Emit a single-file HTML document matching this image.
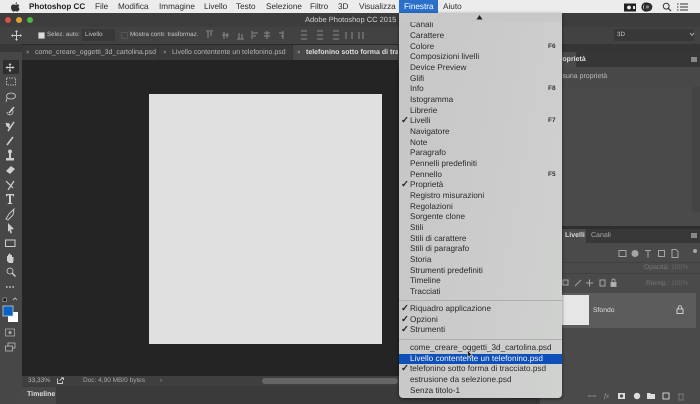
<!DOCTYPE html>
<html><head><meta charset="utf-8">
<style>
html,body{margin:0;padding:0;width:700px;height:404px;overflow:hidden;background:#222}
#r{position:relative;width:700px;height:404px;overflow:hidden;font-family:"Liberation Sans",sans-serif;filter:blur(0.35px);text-rendering:geometricPrecision}
#r div{position:absolute;white-space:nowrap}
.m{top:0;font-size:8.2px;line-height:13px;color:#2c2c2c}
.t{font-size:6.2px;line-height:10px;color:#c4c4c4}
.i{left:410px;font-size:8.2px;line-height:10px;color:#2a2a2a}
.c{left:401px;font-size:9.5px;line-height:10px;color:#222;font-weight:bold}
.f{left:548px;font-size:6.5px;line-height:10px;color:#333;font-weight:bold}
svg{position:absolute;overflow:visible}
</style></head><body><div id="r">

<!-- menu bar -->
<div style="left:0;top:0;width:700px;height:13px;background:#ececec"></div>
<svg style="left:11px;top:2px" width="9" height="10" viewBox="0 0 9 10"><path d="M6 0.300C5 .5 4.500 1.200 4.500 2.200 5.500 2.200 6.200 1.300 6 .3ZM4.400 2.900C3.600 2.900 3 2.400 2.300 2.400 1 2.500 0 3.600 0 5.200 0 7.200 1.400 9.600 2.500 9.600 3.200 9.600 3.600 9.100 4.400 9.100 5.200 9.100 5.500 9.600 6.300 9.600 7.300 9.600 8.200 8 8.600 6.900 7.500 6.400 7.100 4.400 8.400 3.400 7.800 2.600 7 2.400 6.400 2.400 5.600 2.400 5 2.900 4.400 2.900Z" fill="#333"/></svg>
<div class="m" style="left:29px;font-weight:bold;color:#222;font-size:8.100px">Photoshop CC</div>
<div class="m" style="left:95px">File</div>
<div class="m" style="left:118px">Modifica</div>
<div class="m" style="left:159px">Immagine</div>
<div class="m" style="left:204px">Livello</div>
<div class="m" style="left:236px">Testo</div>
<div class="m" style="left:266px">Selezione</div>
<div class="m" style="left:310px">Filtro</div>
<div class="m" style="left:338px">3D</div>
<div class="m" style="left:359px">Visualizza</div>
<div style="left:399px;top:0;width:39px;height:13px;background:#2a6fc9"></div>
<div class="m" style="left:404px;color:#fff">Finestra</div>
<div class="m" style="left:443px">Aiuto</div>
<svg style="left:624px;top:3px" width="12" height="9" viewBox="0 0 12 9"><rect x="0" y="0.500" width="12" height="8" fill="#222"/><circle cx="5" cy="4.500" r="1.900" fill="#eee"/><rect x="9" y="3" width="2" height="3" fill="#eee"/></svg>
<svg style="left:641px;top:2px" width="12" height="10" viewBox="0 0 12 10"><circle cx="5" cy="5" r="3.800" fill="none" stroke="#222" stroke-width="1.600"/><circle cx="7" cy="5" r="3.800" fill="#333" stroke="#222"/><circle cx="6.500" cy="5" r="1.500" fill="#888"/></svg>
<svg style="left:662px;top:2px" width="10" height="10" viewBox="0 0 10 10"><circle cx="4.200" cy="4.200" r="2.900" fill="none" stroke="#333" stroke-width="1"/><path d="M6.300 6.300L9 9" stroke="#333" stroke-width="1.200"/></svg>
<svg style="left:677px;top:3px" width="11" height="8" viewBox="0 0 11 8"><path d="M0 1h1.500M3 1h8M0 4h1.500M3 4h8M0 7h1.500M3 7h8" stroke="#333" stroke-width="1"/></svg>

<!-- title bar -->
<div style="left:0;top:13px;width:700px;height:14px;background:#3d3d3d"></div>
<div style="left:5px;top:17px;width:6px;height:6px;border-radius:50%;background:#d8504a"></div>
<div style="left:16px;top:17px;width:6px;height:6px;border-radius:50%;background:#dba22e"></div>
<div style="left:27px;top:17px;width:6px;height:6px;border-radius:50%;background:#4cb844"></div>
<div style="left:305px;top:14px;font-size:7.500px;line-height:12px;color:#d0d0d0">Adobe Photoshop CC 2015</div>

<!-- options bar -->
<div style="left:0;top:27px;width:700px;height:17px;background:#424242"></div>
<svg style="left:11px;top:30px" width="11" height="11" viewBox="0 0 11 11"><path d="M5.500 0L7 2H6v3h3V4l2 1.500L9 7V6H6v3h1L5.500 11 4 9h1V6H2v1L0 5.500 2 4v1h3V2H4Z" fill="#ccc"/></svg>
<div style="left:38px;top:32px;width:5px;height:5px;background:#ddd;border-radius:1px;border:0.5px solid #999"></div>
<div class="t" style="left:47px;top:30px">Selez. auto:</div>
<div style="left:82px;top:29px;width:33px;height:12px;background:#383838"></div>
<div class="t" style="left:85px;top:30px">Livello</div>
<div style="left:121px;top:32px;width:5px;height:5px;border:1px solid #555;border-radius:1px"></div>
<div class="t" style="left:130px;top:30px">Mostra contr. trasformaz.</div>
<svg style="left:205px;top:30px" width="170" height="11" viewBox="0 0 170 11" stroke="#8a8a8a" fill="#8a8a8a" stroke-width="1"><path d="M1 1h7M3 2v6M6 2v4M17 5h7M19 2v7M22 3v5M32 9h7M34 3v6M37 4v5M47 1v8M48 3h5M48 6h3M62 1v8M59 3h6M59 6h6M78 1v8M74 3h4M76 6h2M96 1h6M96 5h6M96 9h6M112 1h6M112 5h6M112 9h6M128 1h6M128 5h6M128 9h6M141 2v7M147 2v7M154 2v7M158 2v7"/></svg>
<div style="left:614px;top:29px;width:80px;height:12px;background:#383838"></div>
<div class="t" style="left:617px;top:30px">3D</div>
<svg style="left:690px;top:33px" width="4" height="3" viewBox="0 0 4 3"><path d="M0 0L2 2.400 4 0" stroke="#aaa" fill="none"/></svg>

<!-- tabs -->
<div style="left:0;top:44px;width:700px;height:16px;background:#343434"></div>
<div style="left:0;top:44px;width:700px;height:1px;background:#2a2a2a"></div>
<div style="left:22px;top:45px;width:136px;height:15px;background:#3a3a3a"></div>
<div style="left:159px;top:45px;width:133px;height:15px;background:#3a3a3a"></div>
<div style="left:293px;top:45px;width:105px;height:15px;background:#484848"></div>
<div class="t" style="left:26px;top:48px;font-size:6px;color:#aaa">×</div>
<div class="t" style="left:35px;top:48px;font-size:7px;color:#b5b5b5">come_creare_oggetti_3d_cartolina.psd</div>
<div class="t" style="left:163px;top:48px;font-size:6px;color:#aaa">×</div>
<div class="t" style="left:172px;top:48px;font-size:7px;color:#b5b5b5">Livello contentente un telefonino.psd</div>
<div class="t" style="left:297px;top:48px;font-size:6px;color:#bbb">×</div>
<div class="t" style="left:306px;top:48px;font-size:7px;font-weight:bold;color:#ddd">telefonino sotto forma di tracciato.psd</div>

<!-- canvas -->
<div style="left:22px;top:60px;width:540px;height:344px;background:#242424"></div>
<div style="left:149px;top:94px;width:233px;height:250px;background:#e0e0e0"></div>

<!-- left tool bar -->
<div style="left:0;top:44px;width:22px;height:360px;background:#474747"></div>
<div style="left:0;top:44px;width:22px;height:8px;background:#383838"></div>
<div style="left:3px;top:60px;width:16px;height:14px;background:#2f2f2f"></div>
<svg style="left:0;top:60px" width="22" height="310" viewBox="0 0 22 310">
 <g fill="#cfcfcf" stroke="#cfcfcf" stroke-width="0.800">
 <path d="M10 3L11.500 5H10.500V7H12.500V6L14.500 7.500 12.500 9V8H10.500V10H11.500L10 12 8.500 10H9.500V8H7.500V9L5.500 7.500 7.500 6V7H9.500V5H8.500Z" stroke="none"/>
 <rect x="6.500" y="18" width="9" height="7" fill="none" stroke-dasharray="1.500 1"/>
 <ellipse cx="11" cy="36" rx="4.500" ry="3" fill="none"/><path d="M7 38L6 42" fill="none"/>
 <path d="M7 52a3 3 0 1 0 4-3" fill="none"/><path d="M9 53L14 47" stroke-width="1.500"/>
 <path d="M6 63L10 69M14 62L8 71" stroke-width="1.500"/><circle cx="8" cy="65" r="1.500"/>
 <path d="M7 85L13 77" stroke-width="1.600"/>
 <path d="M6 98h8v2.500H6z" stroke="none"/><path d="M9 98V93h2v5z" stroke="none"/><circle cx="10" cy="91.500" r="2" stroke="none"/>
 <path d="M6 111L11 106 15 109 10 114z" stroke="none"/>
 <path d="M6 121L10 125 13 128M14 121L8 130" fill="none" stroke-width="1.200"/>
 <path d="M6 134h8v2.500h-.8l-.5-1.200H11V143h1.200v1H7.800v-1H9V135.300H7.300L6.800 136.500H6z" stroke="none"/>
 <path d="M9 154L14 149 13 155 8 160 6 159z" fill="none" stroke-width="0.900"/>
 <path d="M8 163L14 169 11 169.500 12 173 10.500 173.500 9.500 170 8 172z" stroke="none"/>
 <rect x="5.500" y="180" width="9.500" height="6.500" fill="none" stroke-width="1"/>
 <path d="M7 201V196h1V194.500h1V193.500h1v1h1V195h1v2h1.500v3L13 203H9z" stroke="none"/>
 <circle cx="10" cy="211" r="3" fill="none"/><path d="M12.200 213.200L15.500 216.500" stroke-width="1.400"/>
 <path d="M6 227h1.500M9.200 227h1.500M12.400 227h1.500" stroke-width="1.500"/>
 </g>
 <rect x="3" y="238" width="3.500" height="3.500" fill="#111" stroke="#ccc" stroke-width=".5"/>
 <path d="M13 240L15 238 17 240" stroke="#ccc" fill="none" stroke-width=".8"/>
 <rect x="8" y="252" width="10" height="10" fill="#fff"/>
 <rect x="3" y="246" width="10" height="10" fill="#0a62c4" stroke="#ddd" stroke-width=".7"/>
 <rect x="5.500" y="269" width="9" height="7" fill="none" stroke="#aaa" stroke-width=".8"/><circle cx="10" cy="272.500" r="1.500" fill="#aaa"/>
 <rect x="8" y="283" width="7" height="5" fill="none" stroke="#bbb" stroke-width=".8"/><rect x="5.500" y="286" width="7" height="5" fill="#474747" stroke="#bbb" stroke-width=".8"/>
</svg>

<!-- status bar -->
<div style="left:22px;top:376px;width:540px;height:10px;background:#3f3f3f"></div>
<div style="left:262px;top:378px;width:136px;height:6px;background:#666;border-radius:3px"></div>
<div class="t" style="left:28px;top:376px;font-size:6.500px;color:#b5b5b5">33,33%</div>
<svg style="left:57px;top:377px" width="7" height="7" viewBox="0 0 7 7"><path d="M.5 1.500V6.500H5.500V4M2.500 3.500L6 1M4 .8H6.500V3" stroke="#ccc" fill="none" stroke-width=".9"/></svg>
<div class="t" style="left:83px;top:376px;font-size:6.500px;color:#a5a5a5">Doc: 4,90 MB/0 bytes</div>
<div class="t" style="left:160px;top:376px;font-size:6.500px;color:#aaa">›</div>
<!-- timeline -->
<div style="left:22px;top:386px;width:540px;height:18px;background:#3a3a3a"></div>
<div style="left:22px;top:387px;width:34px;height:17px;background:#484848"></div>
<div class="t" style="left:27px;top:390px;font-weight:bold;font-size:7px;color:#ddd">Timeline</div>

<!-- right panels -->
<div style="left:562px;top:44px;width:138px;height:360px;background:#3d3d3d"></div>
<div style="left:398px;top:44px;width:302px;height:8px;background:#353535"></div>
<div style="left:398px;top:52px;width:302px;height:15px;background:#363636"></div>
<div style="left:540px;top:52px;width:36px;height:15px;background:#4a4a4a"></div>
<div class="t" style="left:555px;top:55px;font-weight:bold;color:#ddd;font-size:7px">Proprietà</div>
<div style="left:691px;top:57px;width:6px;height:5px;background:#888"></div>
<div style="left:540px;top:67px;width:160px;height:159px;background:#4a4a4a"></div>
<div style="left:540px;top:67px;width:160px;height:20px;background:#484848"></div>
<div class="t" style="left:550px;top:72px;font-size:7px;color:#bbb">Nessuna proprietà</div>
<div style="left:692px;top:87px;width:8px;height:125px;background:#444"></div>
<div style="left:540px;top:226px;width:160px;height:3px;background:#2e2e2e"></div>
<div style="left:540px;top:229px;width:160px;height:14px;background:#383838"></div>
<div style="left:540px;top:229px;width:46px;height:14px;background:#4a4a4a"></div>
<div class="t" style="left:565px;top:231px;font-weight:bold;color:#ddd;font-size:7px">Livelli</div>
<div class="t" style="left:591px;top:231px;color:#aaa;font-size:7px">Canali</div>
<div style="left:691px;top:233px;width:6px;height:5px;background:#888"></div>
<div style="left:540px;top:243px;width:160px;height:161px;background:#4a4a4a"></div>
<div style="left:540px;top:262px;width:160px;height:1px;background:#414141"></div>
<div style="left:540px;top:273px;width:160px;height:1px;background:#414141"></div>
<div class="t" style="left:644px;top:263px;font-size:6.800px;color:#777">Opacità:</div>
<div class="t" style="left:671px;top:263px;font-size:6.800px;color:#686868">100%</div>
<div class="t" style="left:646px;top:279px;font-size:6.800px;color:#777">Riemp.:</div>
<div class="t" style="left:671px;top:279px;font-size:6.800px;color:#686868">100%</div>
<svg style="left:618px;top:249px" width="82" height="10" viewBox="0 0 82 10" stroke="#a5a5a5" fill="none"><rect x="1" y="1.500" width="7" height="6"/><circle cx="17" cy="4.500" r="3" fill="#a5a5a5"/><path d="M27 1.500h6M30 1.500v7"/><rect x="40.500" y="1.500" width="6" height="6"/><path d="M54 .5h4l2 2v6h-6z"/><circle cx="77" cy="2" r="2" fill="#a5a5a5" stroke="none"/></svg>
<svg style="left:555px;top:278px" width="70" height="10" viewBox="0 0 70 10" stroke="#a5a5a5" fill="none"><rect x="8" y="2" width="5" height="5"/><path d="M20 8L26 2M31 5h7M34.500 1.500v7M45 2h5v6h-5z"/><rect x="56" y="4.500" width="5" height="4" fill="#b5b5b5"/><path d="M57 4.500v-2a1.500 1.500 0 0 1 3 0v2"/></svg>
<div style="left:540px;top:293px;width:156px;height:35px;background:#5c5c5c"></div>
<div style="left:560px;top:295px;width:29px;height:30px;background:#e6e6e6"></div>
<div class="t" style="left:593px;top:306px;font-size:6.800px;color:#ddd">Sfondo</div>
<svg style="left:676px;top:305px" width="8" height="9" viewBox="0 0 8 9"><rect x="1" y="4" width="6" height="4.500" fill="none" stroke="#ccc"/><path d="M2.300 4V2.500a1.700 1.700 0 0 1 3.400 0V4" stroke="#ccc" fill="none"/></svg>
<svg style="left:588px;top:390px" width="100" height="12" viewBox="0 0 100 12" stroke="#999" fill="none"><path d="M0 6h3.500M4.500 6h3.500" stroke="#777" stroke-width="1.600"/><rect x="30" y="3" width="7" height="6" fill="#ddd" stroke="none"/><circle cx="33.500" cy="6" r="1.600" fill="#4a4a4a" stroke="none"/><circle cx="49" cy="6" r="3.200" fill="#ddd" stroke="none"/><path d="M59 3h3l1 1h4v5h-8z" fill="#ddd" stroke="none"/><rect x="75" y="3" width="6" height="6" stroke="#ccc"/><path d="M90 4h6M91 4v6h4V4" stroke="#777"/></svg>
<div class="t" style="left:604px;top:391px;font-size:7px;font-style:italic;color:#999;font-family:'Liberation Serif',serif">fx</div>
<div style="left:536px;top:333px;width:1px;height:71px;background:#333"></div>

<!-- dropdown -->
<div style="left:399px;top:13px;width:163px;height:385px;background:linear-gradient(100deg,#c6c6c6,#cbcccb 60%,#d0d2d0);border-radius:0 0 4px 4px;box-shadow:0 1px 3px rgba(0,0,0,.5)"></div>
<div class="i" style="top:20px">Canali</div>
<div style="left:399px;top:13px;width:163px;height:9px;background:#c8c8c8"></div>
<svg style="left:476px;top:15px" width="7" height="5" viewBox="0 0 7 5"><path d="M3.500 0L6.500 4.500H.5Z" fill="#222"/></svg>
<div class="i" style="top:31px">Carattere</div>
<div class="i" style="top:41.500px">Colore</div>
<div class="i" style="top:52px">Composizioni livelli</div>
<div class="i" style="top:63px">Device Preview</div>
<div class="i" style="top:73.500px">Glifi</div>
<div class="i" style="top:84px">Info</div>
<div class="i" style="top:95px">Istogramma</div>
<div class="i" style="top:105.500px">Librerie</div>
<div class="i" style="top:116px">Livelli</div>
<div class="i" style="top:127px">Navigatore</div>
<div class="i" style="top:137.500px">Note</div>
<div class="i" style="top:148px">Paragrafo</div>
<div class="i" style="top:159px">Pennelli predefiniti</div>
<div class="i" style="top:169.500px">Pennello</div>
<div class="i" style="top:180px">Proprietà</div>
<div class="i" style="top:191px">Registro misurazioni</div>
<div class="i" style="top:201.500px">Regolazioni</div>
<div class="i" style="top:212px">Sorgente clone</div>
<div class="i" style="top:223px">Stili</div>
<div class="i" style="top:233.500px">Stili di carattere</div>
<div class="i" style="top:244px">Stili di paragrafo</div>
<div class="i" style="top:255px">Storia</div>
<div class="i" style="top:265.500px">Strumenti predefiniti</div>
<div class="i" style="top:276px">Timeline</div>
<div class="i" style="top:287px">Tracciati</div>
<div style="left:399px;top:300px;width:163px;height:1px;background:#aeaeae"></div>
<div class="i" style="top:304px">Riquadro applicazione</div>
<div class="i" style="top:314.500px">Opzioni</div>
<div class="i" style="top:325px">Strumenti</div>
<div style="left:399px;top:339px;width:163px;height:1px;background:#aeaeae"></div>
<div class="i" style="top:343px">come_creare_oggetti_3d_cartolina.psd</div>
<div style="left:399px;top:353.500px;width:163px;height:10.500px;background:#0f4fb8"></div>
<div class="i" style="top:353.500px;color:#f2f4fa">Livello contentente un telefonino.psd</div>
<div class="i" style="top:364px">telefonino sotto forma di tracciato.psd</div>
<div class="i" style="top:375px">estrusione da selezione.psd</div>
<div class="i" style="top:385.500px">Senza titolo-1</div>
<div class="c" style="top:116px">✓</div>
<div class="c" style="top:180px">✓</div>
<div class="c" style="top:304px">✓</div>
<div class="c" style="top:314.500px">✓</div>
<div class="c" style="top:325px">✓</div>
<div class="c" style="top:364px">✓</div>
<div class="f" style="top:41.500px">F6</div>
<div class="f" style="top:84px">F8</div>
<div class="f" style="top:116px">F7</div>
<div class="f" style="top:169.500px">F5</div>
<svg style="left:467px;top:350px" width="6" height="9" viewBox="0 0 6 9"><path d="M.5 .5L.5 7 2 5.800 3 8.300 4.200 7.800 3.200 5.400 5.300 5.200Z" fill="#222" stroke="#eee" stroke-width=".5"/></svg>

</div></body></html>
